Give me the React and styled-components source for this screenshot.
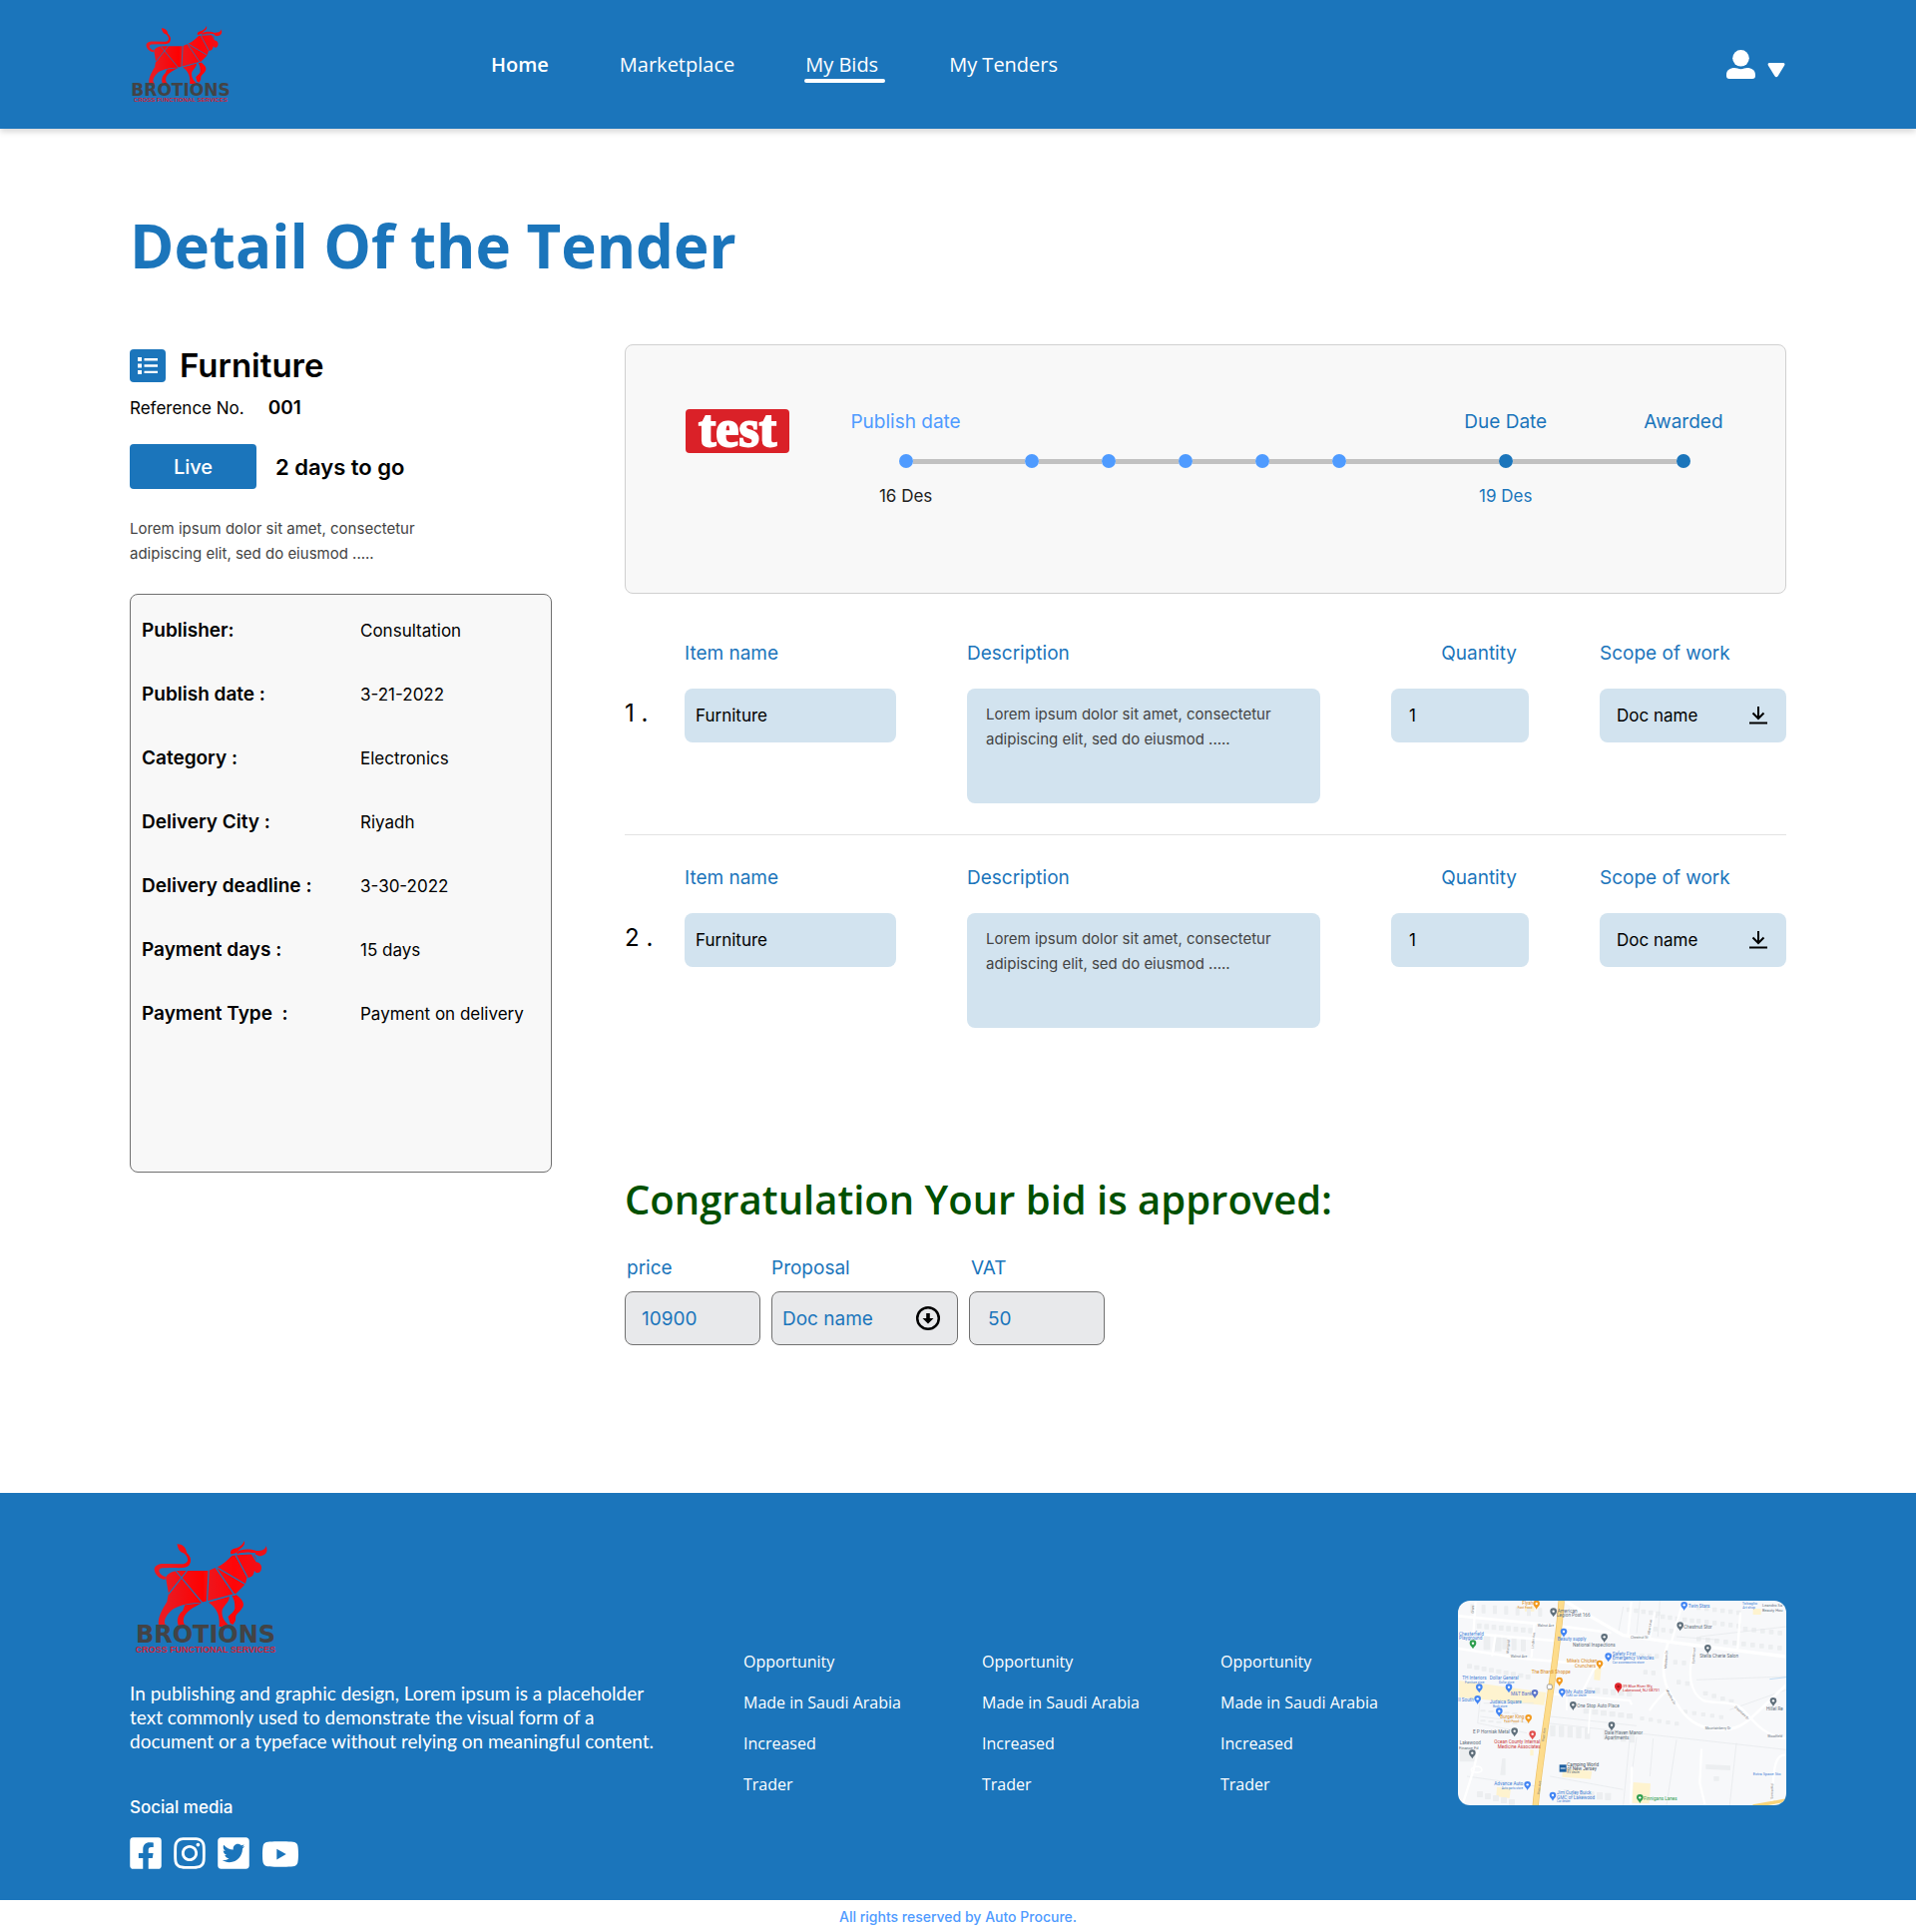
import React from "react";
import styled, { createGlobalStyle } from "styled-components";
import { FaFacebookSquare, FaInstagram, FaTwitterSquare, FaYoutube } from "react-icons/fa";

const brand = "#1b75bb";
const sky = "#4f9bff";
const ui = `Inter, "Open Sans", sans-serif`;
const text = `"Open Sans", "Noto Sans", sans-serif`;

const GlobalStyle = createGlobalStyle`
  *, *::before, *::after { box-sizing: border-box; }
  body { margin: 0; background: #fff; color: #000; font-family: ${ui}; font-size: 17px; line-height: 24px; }
  h1, h2, h3, p, ul, ol, dl, dd { margin: 0; padding: 0; }
  ul, ol { list-style: none; }
  a { color: inherit; text-decoration: none; }
  button, input, textarea { font-family: inherit; }
  svg { display: block; }
`;

/* ---------- Logo ---------- */

const LogoBox = styled.a`
  display: flex;
  flex-direction: column;
  align-items: center;
  width: ${(p) => (p.$large ? 152 : 102)}px;
  flex: none;
  svg {
    width: 100%;
    height: ${(p) => (p.$large ? 86 : 58)}px;
  }
`;

const LogoName = styled.span`
  font: bold ${(p) => (p.$large ? 24 : 17)}px / ${(p) => (p.$large ? 17 : 12)}px "DejaVu Sans", sans-serif;
  color: #434345;
`;

const LogoTag = styled.span`
  font: bold ${(p) => (p.$large ? 9 : 6)}px / ${(p) => (p.$large ? 12 : 8)}px "Liberation Sans", sans-serif;
  color: #cf2338;
  white-space: nowrap;
`;

function Logo({ large }) {
  const id = large ? "hide-large" : "hide-small";
  return (
    <LogoBox href="#home" $large={large} aria-label="Brotions home">
      <svg viewBox="57 40 426 258" preserveAspectRatio="none" aria-hidden="true">
        <defs>
          <linearGradient id={id} x1="160" x2="430" y1="0" y2="0" gradientUnits="userSpaceOnUse">
            <stop offset="0" stopColor="#ea1a22" />
            <stop offset="0.38" stopColor="#ff0000" />
            <stop offset="0.44" stopColor="#ee151c" />
            <stop offset="0.7" stopColor="#ff0508" />
            <stop offset="1" stopColor="#f01018" />
          </linearGradient>
        </defs>
        <g fill={`url(#${id})`}>
          <path d="M190 50C203 49 215 58 217 76C229 87 232 102 223 114C214 122 200 122 180 121L148 122C139 123 137 132 143 139C148 145 153 147 158 148L156 157C140 154 128 142 126 127C126 113 140 108 156 109L200 110C215 111 222 103 219 92C217 86 213 81 208 77C196 74 192 62 190 50Z" />
          <path d="M158 150C164 137 178 130 195 130L278 130L302 119C322 110 334 94 345 84C360 78 384 76 400 80C412 84 412 94 413 103C420 106 427 110 427 120C427 131 421 138 412 136L407 130C406 140 402 147 396 149L386 152L382 170L352 202L300 216L262 226C232 226 198 230 172 250L162 220L166 198Z" />
          <path d="M163 221L174 249C162 262 154 272 155 288L161 298H139C134 278 142 256 163 221Z" />
          <path d="M212 233L260 227C236 240 216 252 209 270C206 282 208 290 216 298H195C187 280 192 262 206 250Z" />
          <path d="M278 225L336 207C340 218 324 232 317 246C314 262 318 280 340 298H308C311 270 304 242 278 225Z" />
          <path d="M344 206L356 202C368 212 379 224 376 235C373 247 360 256 355 266L354 280L347 292L339 288L333 268C343 258 354 250 352 238C352 226 350 216 344 206Z" />
          <path d="M341 80C337 70 345 64 357 62C368 57 376 49 378 40C384 54 370 60 363 69C356 78 350 78 341 80Z" />
          <path d="M358 74C370 62 400 64 412 70C424 71 438 68 440 55C447 74 438 85 420 86L404 77C390 72 370 76 358 80Z" />
        </g>
        <g fill="none" stroke={brand} strokeWidth="3.5">
          <path d="M186 130L262 228M218 130L166 200M279 128L274 226M298 120L352 204M300 119L384 172M354 82L388 150M346 82L410 78M400 78L414 104M262 226L354 200" />
        </g>
      </svg>
      <LogoName $large={large}>BROTIONS</LogoName>
      <LogoTag $large={large}>CROSS FUNCTIONAL SERVICES</LogoTag>
    </LogoBox>
  );
}

/* ---------- Header ---------- */

const Header = styled.header`
  display: flex;
  align-items: center;
  height: 129px;
  padding: 0 130px;
  background: ${brand};
  box-shadow: 0 3px 6px rgba(0, 0, 0, 0.16);
`;

const Nav = styled.nav`
  display: flex;
  gap: 71px;
  margin-left: 260px;
`;

const NavLink = styled.a`
  position: relative;
  color: #fff;
  font: ${(p) => (p.$bold ? 600 : 400)} 20px / 27px ${text};
  &[aria-current="page"]::after {
    content: "";
    position: absolute;
    left: -1px;
    right: -7px;
    top: 28px;
    height: 4px;
    border-radius: 2px;
    background: #fff;
  }
`;

const UserButton = styled.button`
  display: flex;
  align-items: flex-end;
  gap: 12px;
  margin-left: auto;
  padding: 0;
  border: 0;
  background: none;
  color: #fff;
`;

/* ---------- Page ---------- */

const Main = styled.main`
  padding: 76px 130px 148px;
`;

const Title = styled.h1`
  color: ${brand};
  font: 700 60px / 82px ${text};
`;

const Columns = styled.div`
  display: grid;
  grid-template-columns: 423px 1fr;
  align-items: start;
  gap: 73px;
  margin-top: 58px;
`;

const Summary = styled.section`
  padding-top: 5px;
`;

const TenderHead = styled.div`
  display: flex;
  align-items: center;
  gap: 14px;
  height: 33px;
`;

const TenderIcon = styled.span`
  display: grid;
  place-items: center;
  width: 36px;
  height: 33px;
  border-radius: 4px;
  background: ${brand};
`;

const TenderName = styled.h2`
  font: 600 33px / 33px ${ui};
`;

const Reference = styled.p`
  display: flex;
  gap: 24px;
  margin-top: 14px;
  strong {
    font-size: 19px;
    font-weight: 600;
  }
`;

const Status = styled.div`
  display: flex;
  align-items: center;
  gap: 19px;
  margin-top: 24px;
  font-size: 22px;
  font-weight: 600;
`;

const LiveButton = styled.button`
  width: 127px;
  height: 45px;
  border: 0;
  border-radius: 4px;
  background: ${brand};
  color: #fff;
  font-size: 20px;
  font-weight: 500;
`;

const Blurb = styled.p`
  width: 300px;
  margin-top: 27px;
  color: #444;
  font-size: 15px;
  line-height: 25px;
`;

const Facts = styled.dl`
  display: flex;
  flex-direction: column;
  gap: 40px;
  margin-top: 28px;
  padding: 24px 11px 146px;
  border: 1px solid #707070;
  border-radius: 8px;
  background: #f8f8f8;
`;

const Fact = styled.div`
  display: grid;
  grid-template-columns: 219px 1fr;
  white-space: pre;
  dt {
    font-size: 19px;
    font-weight: 600;
  }
  dd {
    font-size: 17px;
  }
`;

/* ---------- Timeline ---------- */

const TimelineCard = styled.section`
  display: flex;
  align-items: flex-start;
  gap: 29px;
  padding: 64px 52px 85px 60px;
  border: 1px solid #d0d0d0;
  border-radius: 8px;
  background: #f8f8f8;
`;

const TestLogo = styled.div`
  flex: none;
  width: 104px;
  height: 44px;
  border-radius: 4px;
  background: #da2128;
  color: #fff;
  font: bold 52px / 40px "Liberation Serif", serif;
  text-align: center;
  -webkit-text-stroke: 2px #fff;
`;

const Timeline = styled.ol`
  flex: 1;
  display: grid;
  grid-template-columns: 175fr repeat(5, 77fr) 256fr 100fr;
`;

const Step = styled.li`
  display: grid;
  grid-template-rows: 28px 14px 24px;
  row-gap: 16px;
  justify-items: center;
  padding-top: 1px;
  color: ${(p) => (p.$done ? sky : brand)};
  font-size: 19px;
  white-space: nowrap;
`;

const Marker = styled.span`
  display: flex;
  align-items: center;
  width: 100%;
  &::before,
  &::after {
    content: "";
    flex: 1;
    height: 5px;
    background: #c1c1c1;
  }
  ${Step}:first-child &::before,
  ${Step}:last-child &::after {
    background: none;
  }
`;

const Dot = styled.i`
  width: 14px;
  height: 14px;
  border-radius: 50%;
  background: currentColor;
`;

const StepDate = styled.time`
  color: ${(p) => (p.$dark ? "#222" : "inherit")};
  font-size: 17px;
`;

/* ---------- Items ---------- */

const Items = styled.ol`
  margin-top: 48px;
`;

const Item = styled.li`
  display: flex;
  & + & {
    margin-top: 31px;
    padding-top: 31px;
    border-top: 1px solid #e2e2e2;
  }
`;

const ItemNumber = styled.span`
  width: 60px;
  padding-top: 60px;
  font-size: 24px;
`;

const ItemFields = styled.div`
  flex: 1;
  display: grid;
  grid-template-columns: 212fr 354fr 138fr 187fr;
  align-items: start;
  gap: 71px;
`;

const Field = styled.div`
  display: flex;
  flex-direction: column;
  gap: ${(p) => (p.$tight ? 11 : 23)}px;
  width: ${(p) => (p.$width ? `${p.$width}px` : "auto")};
  min-width: 0;
`;

const Label = styled.label`
  padding: 0 ${(p) => (p.$end ? 12 : 0)}px 0 ${(p) => (p.$inset ? 2 : 0)}px;
  color: ${brand};
  font-size: 19px;
  text-align: ${(p) => (p.$end ? "right" : "left")};
`;

const Input = styled.input`
  width: 100%;
  height: 54px;
  padding: 0 ${(p) => p.$pad}px;
  border: ${(p) => (p.$outlined ? "1px solid #707070" : "0")};
  border-radius: 8px;
  background: ${(p) => (p.$outlined ? "#e8e9eb" : "#d2e3ef")};
  color: ${(p) => (p.$outlined ? brand : "#000")};
  font-size: ${(p) => (p.$outlined ? 19 : 17)}px;
`;

const TextArea = styled.textarea`
  width: 100%;
  height: 115px;
  padding: 13px 19px;
  border: 0;
  border-radius: 8px;
  background: #d2e3ef;
  color: #444;
  font-size: 15px;
  line-height: 25px;
  resize: none;
`;

const DocButton = styled.button`
  display: flex;
  align-items: center;
  justify-content: space-between;
  width: 100%;
  height: 54px;
  padding: 0 ${(p) => (p.$outlined ? "16px 0 10px" : "19px 0 17px")};
  border: ${(p) => (p.$outlined ? "1px solid #707070" : "0")};
  border-radius: 8px;
  background: ${(p) => (p.$outlined ? "#e8e9eb" : "#d2e3ef")};
  color: ${(p) => (p.$outlined ? brand : "#000")};
  font-size: ${(p) => (p.$outlined ? 19 : 17)}px;
  svg {
    color: #000;
  }
`;

const Approved = styled.h2`
  margin-top: 145px;
  color: #005000;
  font: 600 40px / 54px ${text};
`;

const BidFields = styled.div`
  display: flex;
  gap: 11px;
  margin-top: 30px;
`;

/* ---------- Footer ---------- */

const Footer = styled.footer`
  display: grid;
  grid-template-columns: 615fr 239fr 239fr 238fr 329px;
  align-items: start;
  padding: 48px 130px 27px;
  background: ${brand};
  color: #fff;
`;

const About = styled.p`
  width: 536px;
  margin-top: 26px;
  font: 400 19px / 24px Lato, sans-serif;
`;

const SocialTitle = styled.h3`
  margin-top: 42px;
  font: 500 17px / 24px ${ui};
`;

const Socials = styled.div`
  display: flex;
  gap: 12px;
  margin-top: 16px;
  a {
    display: flex;
    justify-content: center;
    width: 32px;
    font-size: 36px;
  }
  a:last-child {
    width: 37px;
    font-size: 38px;
    align-items: center;
  }
  svg {
    flex: none;
  }
`;

const FooterLinks = styled.ul`
  display: flex;
  flex-direction: column;
  gap: 17px;
  padding-top: 109px;
  font: 400 16px / 24px ${text};
`;

const MapBox = styled.figure`
  height: 205px;
  margin: 60px 0 0;
  border-radius: 12px;
  overflow: hidden;
  svg {
    width: 100%;
    height: 100%;
  }
`;

const Rights = styled.p`
  padding: 5px 0 5px;
  background: #fff;
  color: ${sky};
  font: 500 14px / 24px ${ui};
  text-align: center;
`;

/* ---------- Map ---------- */

const MapText = styled.text`
  font-family: Roboto, sans-serif;
  font-size: ${(p) => p.$size || 14}px;
`;

const blue = "#3f7fd6";
const grey = "#5f6f7b";
const orange = "#d98a1b";

const places = [
  [299, 84, "#f29a1f", "Flyah", 256, 85, orange],
  [350, 107, grey, "American", 362, 107, grey],
  [743, 88, "#4285f4", "Twin Stars", 755, 94, blue],
  [731, 149, grey, "Chestnut Stor", 742, 155, grey],
  [381, 168, "#4285f4", "Beauty supply", 362, 193, blue],
  [503, 184, grey, "National Inspections", 408, 211, grey],
  [108, 203, "#2f9e4f", "Chesterfield", 66, 176, blue],
  [814, 217, grey, "Stella Cherie Salon", 790, 243, grey],
  [515, 242, "#4285f4", "Safety First", 527, 236, blue],
  [489, 264, "#f29a1f", "Mike's Chicken", 390, 258, orange],
  [368, 315, "#f29a1f", "The Bhardi Shoppe", 284, 290, orange],
  [127, 335, "#4285f4", "TH Interiors", 76, 310, blue],
  [216, 335, "#4285f4", "Dollar General", 158, 310, blue],
  [294, 352, "#5b74c9", "M&T Bank", 222, 357, "#5b74c9"],
  [376, 349, "#4285f4", "My Auto Store", 387, 350, blue],
  [122, 370, "#4285f4", "ll South", 64, 375, blue],
  [409, 388, grey, "One Stop Auto Place", 421, 393, grey],
  [187, 407, "#4285f4", "Judaica Square", 158, 382, blue],
  [275, 427, "#f29a1f", "Burger King", 190, 427, orange],
  [1011, 376, grey, "Hillel Re", 990, 403, grey],
  [233, 467, grey, "E P Horniak Metal", 108, 472, grey],
  [287, 476, "#e2504e", "Ocean County Internal", 172, 501, "#cc3b3b"],
  [525, 449, grey, "Dale Haven Manor", 504, 474, grey],
  [106, 533, grey, "Lakewood", 68, 505, grey],
  [272, 628, "#4285f4", "Advance Auto", 172, 628, blue],
  [348, 660, "#4285f4", "Jim Curley Buick", 360, 655, blue],
  [610, 667, "#2f9e4f", "Finnigans Lanes", 621, 672, "#2f9e4f"],
];

const captions = [
  ["Fast Food", 242, 97, orange, 10],
  ["Legion Post 166", 360, 121, grey],
  ["Playground", 66, 190, blue],
  ["Emergency Vehicles", 527, 249, blue],
  ["Car accessories store", 527, 261, blue, 10],
  ["Crunchers", 414, 272, orange],
  ["Furniture store", 84, 320, blue, 9],
  ["Dollar store", 186, 320, blue, 9],
  ["Used car dealer", 387, 360, blue, 9],
  ["Book store", 168, 393, blue, 9],
  ["Fast Food · $", 202, 438, orange, 10],
  ["Medicine Associates", 182, 515, "#cc3b3b"],
  ["Apartments", 504, 488, grey],
  ["Finance Fd", 66, 519, grey, 12],
  ["Camping World", 391, 569, "#44505a"],
  ["of New Jersey", 391, 582, "#44505a"],
  ["RV dealer", 391, 592, grey, 9],
  ["Auto parts store", 194, 640, blue, 9],
  ["GMC of Lakewood", 360, 668, blue],
  ["Car dealer", 360, 679, blue, 9],
  ["Tobaglio", 917, 85, blue, 12],
  ["Art shop", 919, 96, blue, 10],
  ["Leandro Sa", 978, 91, grey, 12],
  ["Beauty Hou", 978, 104, grey, 12],
  ["Extra Space Sto", 950, 596, blue, 12],
  ["Walnut Ave", 302, 150, grey, 10],
  ["Walnut Ave", 221, 243, grey, 10],
  ["Chestnut St", 582, 186, grey, 10],
  ["Mountainberry Dr", 806, 460, grey, 10],
  ["Woodfield", 994, 482, grey, 10],
];

const upright = [
  ["River Ave", 322, 496, -83],
  ["River Ave", 308, 655, -83],
  ["Mistletoe Dr", 690, 276, -86],
  ["Albert Ave", 640, 175, -82],
  ["Cornflower", 774, 262, -86],
  ["Linden Ave", 290, 216, -84],
  ["Marigold", 215, 230, -84],
  ["Grant", 110, 110, -86],
  ["Sunset Rd", 1010, 668, -88],
  ["Meadow Dr", 688, 340, 62],
  ["Crestview Dr", 894, 392, 44],
];

const houseRows = [
  [120, 140, 8, 22, 2, 14, 16],
  [90, 262, 9, 22, 4, 15, 14],
  [140, 172, 2, 34, 4, 20, 48],
  [196, 176, 3, 28, 3, 15, 42],
  [100, 82, 7, 34, 2, 12, 26],
  [340, 446, 5, 26, 2, 16, 34],
  [500, 460, 4, 26, 3, 16, 30],
  [440, 396, 6, 26, 3, 18, 16],
  [450, 332, 6, 24, 2, 16, 18],
  [570, 92, 5, 22, 3, 13, 14],
  [650, 110, 6, 22, 3, 13, 14],
  [650, 150, 3, 24, 3, 13, 14],
  [780, 86, 6, 24, 3, 13, 14],
  [780, 126, 6, 24, 3, 13, 14],
  [780, 180, 10, 27, 3, 14, 14],
  [920, 150, 5, 26, 3, 14, 14],
  [610, 230, 3, 22, 1, 13, 14],
  [620, 280, 2, 24, 2, 13, 14],
  [710, 250, 2, 26, 2, 13, 14],
  [720, 310, 2, 26, 4, 13, 14],
  [610, 420, 5, 26, 4, 13, 12],
  [740, 400, 5, 27, 4, 13, 12],
  [800, 344, 4, 26, 8, 14, 13],
  [120, 645, 5, 24, 6, 18, 18],
  [380, 640, 6, 25, 2, 18, 22],
  [130, 400, 5, 24, 2, 16, 6],
  [130, 430, 5, 24, 2, 16, 6],
];

const houses = houseRows.flatMap(([x, y, count, pitch, drop, w, h]) =>
  Array.from({ length: count }, (_, i) => ({ x: x + i * pitch, y: y + i * drop, w, h }))
);

function AreaMap() {
  return (
    <svg viewBox="63 72 987 615" preserveAspectRatio="xMidYMid slice" role="img" aria-label="Map of Lakewood">
      <rect x="63" y="72" width="987" height="615" fill="#f7f8fa" />
      <g fill="#fef3cf">
        <path d="M66 312L328 348L322 386L66 362ZM590 618L642 622L638 682L586 680ZM378 576L466 584L462 608L376 602ZM474 272L494 274L490 312L472 310ZM180 632L222 636L218 666L178 660Z" />
        <path d="M950 96h24v18h-24zM264 90h28v14h-28zM280 520h10v18h-10z" />
      </g>
      <g fill="#eceef0">
        {houses.map((h, i) => (
          <rect key={i} x={h.x} y={h.y} width={h.w} height={h.h} rx="2" />
        ))}
        <path d="M808 564l74 4v14l-74-4zM832 600h16v14h-16zM196 546h10v50h-16zM68 514l50 4-4 38-46 0z" />
      </g>
      <g fill="none" stroke="#e4e7ea" strokeWidth="2">
        <path d="M330 440L1050 520M580 480L560 687M600 482L582 620M650 486L640 600M720 490L690 687M90 600L300 630M340 600L560 640M780 310L1050 300M790 180L1050 150M880 400L1050 340M130 366L122 440L270 470M140 380h150M130 420L280 440M340 420L600 448M900 500L880 687M560 90L545 170M610 72L600 170M670 72L664 180M720 180L850 190" />
      </g>
      <g fill="none" stroke="#fff" strokeLinecap="round">
        <path strokeWidth="10" d="M390 76L470 124L560 176L700 196L1050 240" />
        <path strokeWidth="8" d="M66 118L350 146L520 168M66 216L260 246L500 268M70 168L350 192M694 200C670 280 680 330 720 380C750 430 780 450 830 458C900 466 930 440 960 410L1050 325" />
        <path strokeWidth="7" d="M774 220C750 290 762 350 800 372C850 384 890 370 920 400C950 430 980 480 1050 486M1050 536C1020 532 1010 560 1008 680M795 520L790 620L806 687M76 687L110 580L128 500M116 72L106 216M176 176L166 236M292 146L284 240M584 76L574 176M654 110L640 180M738 80L706 192M912 110L904 214M340 352L580 372L584 382M640 400C660 370 680 352 690 344M440 340L470 280L500 250M586 574L582 687" />
        <path strokeWidth="5" d="M118 570c20 0 24 20 0 18c-20 0-20-14 0-18M460 400L455 470M390 360V400" />
      </g>
      <path d="M1000 308L1050 302" stroke="#a5cdf0" strokeWidth="2" />
      <path d="M374 72C366 190 342 340 322 480C312 560 302 620 296 690" fill="none" stroke="#edc36a" strokeWidth="19" />
      <path d="M374 72C366 190 342 340 322 480C312 560 302 620 296 690" fill="none" stroke="#fddc8c" strokeWidth="15" />
      <path d="M950 690L1050 672" stroke="#f9d47a" strokeWidth="10" />
      <rect x="331" y="324" width="15" height="14" rx="4" fill="#fff" stroke="#777" strokeWidth="2" />
      {places.map(([x, y, pin, name, tx, ty, tone]) => (
        <g key={name}>
          <path
            d={`M${x} ${y + 14}C${x - 3} ${y + 6} ${x - 10} ${y + 4} ${x - 10} ${y - 3}a10 10 0 0 1 20 0C${x + 10} ${y + 4} ${x + 3} ${y + 6} ${x} ${y + 14}Z`}
            fill={pin}
          />
          <circle cx={x} cy={y - 3} r="3.5" fill="#fff" />
          <MapText x={tx} y={ty} fill={tone}>{name}</MapText>
        </g>
      ))}
      {captions.map(([label, x, y, tone, size]) => (
        <MapText key={label + y} x={x} y={y} fill={tone} $size={size}>{label}</MapText>
      ))}
      {upright.map(([label, x, y, turn]) => (
        <MapText key={label + y} transform={`translate(${x} ${y}) rotate(${turn})`} fill="#777" $size={10}>{label}</MapText>
      ))}
      <rect x="368" y="565" width="21" height="22" fill="#1d5f9f" />
      <path d="M371 576h15" stroke="#fff" strokeWidth="3" />
      <path d="M545 351C543 341 534 338 534 330a11 11 0 0 1 22 0C556 338 547 341 545 351Z" fill="#e0262c" />
      <circle cx="545" cy="330" r="4" fill="#a81218" />
      <MapText x="558" y="333" fill="#c9252c" $size={12}>39 Blue River Wy,</MapText>
      <MapText x="558" y="346" fill="#c9252c" $size={12}>Lakewood, NJ 08701</MapText>
    </svg>
  );
}

/* ---------- Icons ---------- */

function UserIcon() {
  return (
    <svg width="29" height="29" viewBox="0 0 29 29" fill="currentColor" aria-hidden="true">
      <circle cx="14.5" cy="8.3" r="8.3" />
      <path d="M0 26V25C0 20 4 18 8 18C10.500 18 12 19.200 14.500 19.200S18.500 18 21 18C25 18 29 20 29 25V26Q29 29 26 29H3Q0 29 0 26Z" />
    </svg>
  );
}

function CaretIcon() {
  return (
    <svg width="19" height="17" viewBox="0 0 19 17" fill="currentColor" aria-hidden="true">
      <path d="M2.500 1H15.500Q18.500 1 17 3.700L10.800 14Q9 16.600 7.300 14L1 3.700Q-.3 1 2.500 1Z" />
    </svg>
  );
}

function ListIcon() {
  return (
    <svg width="20" height="17" viewBox="0 0 20 17" fill="#fff" aria-hidden="true">
      <path d="M0 0h4v4H0zM0 6.500h4v4H0zM0 13h4v4H0zM6.500 1h13.500v2.400H6.500zM6.500 7.300h13.500v2.400H6.500zM6.500 13.700h13.500v2.400H6.500z" />
    </svg>
  );
}

function DownloadIcon() {
  return (
    <svg width="18" height="18" viewBox="0 0 18 18" fill="none" stroke="currentColor" strokeWidth="2" aria-hidden="true">
      <path d="M9 0V11M3.500 6.500L9 12L14.500 6.500M0 16.500H18" />
    </svg>
  );
}

function CircleDownIcon() {
  return (
    <svg width="26" height="26" viewBox="0 0 26 26" aria-hidden="true">
      <circle cx="13" cy="13" r="10.800" fill="none" stroke="currentColor" strokeWidth="2.500" />
      <path d="M11.200 8h3.600v5h3.700L13 18.500L7.500 13h3.700Z" fill="currentColor" />
    </svg>
  );
}

/* ---------- Data ---------- */

const facts = [
  ["Publisher:", "Consultation"],
  ["Publish date :", "3-21-2022"],
  ["Category :", "Electronics"],
  ["Delivery City :", "Riyadh"],
  ["Delivery deadline :", "3-30-2022"],
  ["Payment days :", "15 days"],
  ["Payment Type  :", "Payment on delivery"],
];

const steps = [
  { label: "Publish date", date: "16 Des", done: true },
  { done: true },
  { done: true },
  { done: true },
  { done: true },
  { done: true },
  { label: "Due Date", date: "19 Des" },
  { label: "Awarded" },
];

const lorem = "Lorem ipsum dolor sit amet, consectetur adipiscing elit, sed do eiusmod .....";
const footerLinks = ["Opportunity", "Made in Saudi Arabia", "Increased", "Trader"];

function TenderItem({ n }) {
  return (
    <Item>
      <ItemNumber>{n} .</ItemNumber>
      <ItemFields>
        <Field>
          <Label htmlFor={`name-${n}`}>Item name</Label>
          <Input id={`name-${n}`} defaultValue="Furniture" readOnly $pad={11} />
        </Field>
        <Field>
          <Label htmlFor={`desc-${n}`}>Description</Label>
          <TextArea id={`desc-${n}`} defaultValue={lorem} readOnly />
        </Field>
        <Field>
          <Label htmlFor={`qty-${n}`} $end>Quantity</Label>
          <Input id={`qty-${n}`} defaultValue="1" readOnly $pad={18} />
        </Field>
        <Field>
          <Label htmlFor={`scope-${n}`}>Scope of work</Label>
          <DocButton id={`scope-${n}`} type="button">
            Doc name <DownloadIcon />
          </DocButton>
        </Field>
      </ItemFields>
    </Item>
  );
}

export default function App() {
  return (
    <>
      <GlobalStyle />
      <Header>
        <Logo />
        <Nav>
          <NavLink href="#home" $bold>Home</NavLink>
          <NavLink href="#marketplace">Marketplace</NavLink>
          <NavLink href="#bids" aria-current="page">My Bids</NavLink>
          <NavLink href="#tenders">My Tenders</NavLink>
        </Nav>
        <UserButton type="button" aria-label="Account menu">
          <UserIcon />
          <CaretIcon />
        </UserButton>
      </Header>

      <Main>
        <Title>Detail Of the Tender</Title>
        <Columns>
          <Summary>
            <TenderHead>
              <TenderIcon><ListIcon /></TenderIcon>
              <TenderName>Furniture</TenderName>
            </TenderHead>
            <Reference>Reference No. <strong>001</strong></Reference>
            <Status>
              <LiveButton type="button">Live</LiveButton>
              2 days to go
            </Status>
            <Blurb>{lorem}</Blurb>
            <Facts>
              {facts.map(([name, value]) => (
                <Fact key={name}>
                  <dt>{name}</dt>
                  <dd>{value}</dd>
                </Fact>
              ))}
            </Facts>
          </Summary>

          <section>
            <TimelineCard>
              <TestLogo>test</TestLogo>
              <Timeline>
                {steps.map((s, i) => (
                  <Step key={i} $done={s.done}>
                    <span>{s.label}</span>
                    <Marker><Dot /></Marker>
                    {s.date && <StepDate $dark={s.done}>{s.date}</StepDate>}
                  </Step>
                ))}
              </Timeline>
            </TimelineCard>

            <Items>
              <TenderItem n={1} />
              <TenderItem n={2} />
            </Items>

            <Approved>Congratulation Your bid is approved:</Approved>
            <BidFields>
              <Field $tight $width={136}>
                <Label htmlFor="price" $inset>price</Label>
                <Input id="price" defaultValue="10900" readOnly $outlined $pad={16} />
              </Field>
              <Field $tight $width={187}>
                <Label htmlFor="proposal">Proposal</Label>
                <DocButton id="proposal" type="button" $outlined>
                  Doc name <CircleDownIcon />
                </DocButton>
              </Field>
              <Field $tight $width={136}>
                <Label htmlFor="vat" $inset>VAT</Label>
                <Input id="vat" defaultValue="50" readOnly $outlined $pad={18} />
              </Field>
            </BidFields>
          </section>
        </Columns>
      </Main>

      <Footer>
        <div>
          <Logo large />
          <About>
            In publishing and graphic design, Lorem ipsum is a placeholder text commonly used to demonstrate the visual
            form of a document or a typeface without relying on meaningful content.
          </About>
          <SocialTitle>Social media</SocialTitle>
          <Socials>
            <a href="#facebook" aria-label="Facebook"><FaFacebookSquare /></a>
            <a href="#instagram" aria-label="Instagram"><FaInstagram /></a>
            <a href="#twitter" aria-label="Twitter"><FaTwitterSquare /></a>
            <a href="#youtube" aria-label="YouTube"><FaYoutube /></a>
          </Socials>
        </div>
        {[0, 1, 2].map((col) => (
          <FooterLinks key={col}>
            {footerLinks.map((name) => (
              <li key={name}><a href="#footer">{name}</a></li>
            ))}
          </FooterLinks>
        ))}
        <MapBox><AreaMap /></MapBox>
      </Footer>
      <Rights>All rights reserved by Auto Procure.</Rights>
    </>
  );
}
